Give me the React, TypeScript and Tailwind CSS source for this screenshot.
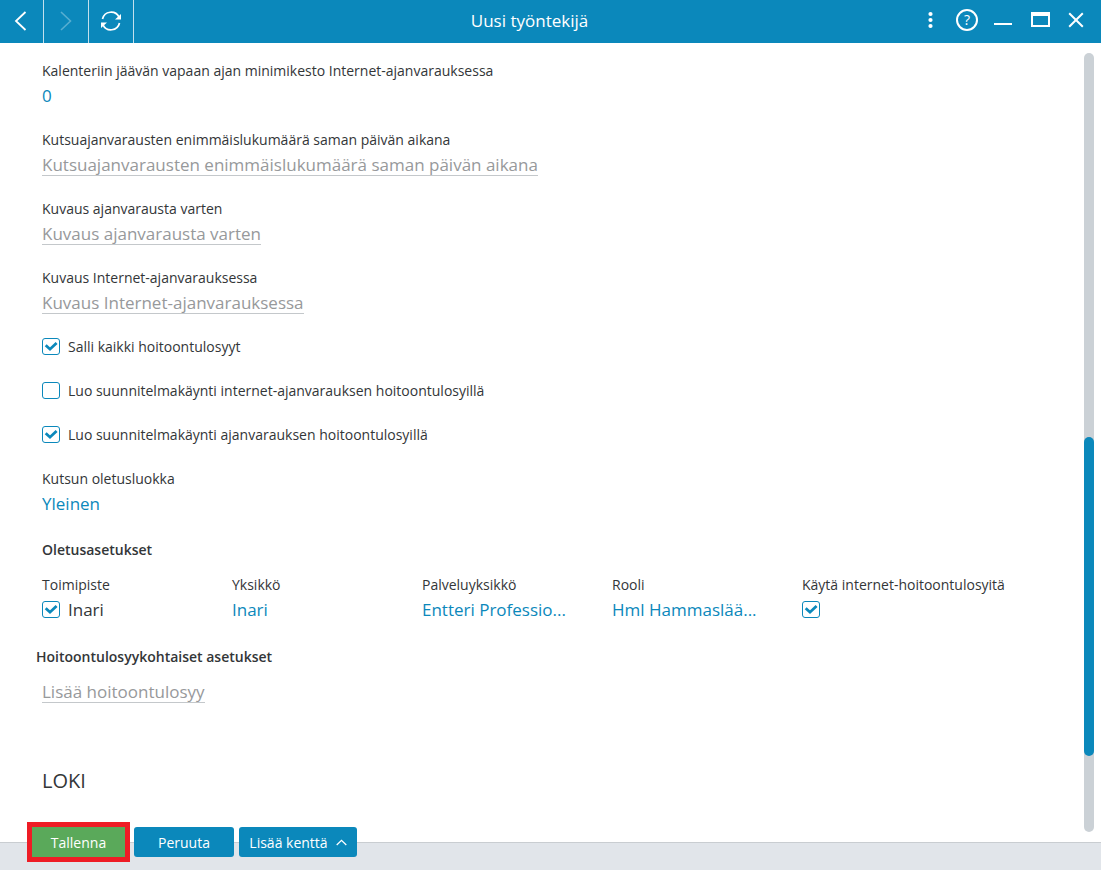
import React, { useState } from "react";

type CheckProps = {
  label: string;
  checked: boolean;
  hideLabel?: boolean;
  large?: boolean;
};

function Check({ label, checked, hideLabel = false, large = false }: CheckProps) {
  const [on, setOn] = useState(checked);
  return (
    <label className="flex h-6 w-fit items-start gap-2 leading-6">
      <span className="grid pt-[3px]">
        <input
          type="checkbox"
          aria-label={hideLabel ? label : undefined}
          checked={on}
          onChange={(e) => setOn(e.target.checked)}
          className="col-start-1 row-start-1 h-[17px] w-[18px] appearance-none rounded-[3px] border border-[#0b88bb] bg-white"
        />
        {on && (
          <svg viewBox="0 0 18 17" className="pointer-events-none col-start-1 row-start-1 h-[17px] w-[18px]" fill="none" stroke="#0b88bb" strokeWidth="2.8">
            <path d="M3.7 7.2 8 11.2 14.6 5" />
          </svg>
        )}
      </span>
      {!hideLabel && <span className={large ? "text-[17px] leading-6" : ""}>{label}</span>}
    </label>
  );
}

function TextField({ id, label, value }: { id: string; label: string; value?: string }) {
  return (
    <div className="pb-px">
      <label htmlFor={id} className="block leading-6">
        {label}
      </label>
      <input
        id={id}
        type="text"
        defaultValue={value}
        placeholder={value ? undefined : label}
        className={
          value
            ? "block h-6 max-w-full pt-0.5 text-[17px] text-[#0b88bb] outline-none [field-sizing:content]"
            : "block h-6 max-w-full border-b border-[#c4c8cb] pt-0.5 text-[17px] outline-none [field-sizing:content] placeholder:text-[#97999b]"
        }
      />
    </div>
  );
}

function SelectField({ id, label, value }: { id: string; label: string; value: string }) {
  return (
    <div className="min-w-0 pb-px">
      <label htmlFor={id} className="block leading-6">
        {label}
      </label>
      <select id={id} className="block h-6 max-w-full appearance-none text-[17px] text-[#0b88bb] outline-none">
        <option>{value}</option>
      </select>
    </div>
  );
}

export default function App() {
  return (
    <div className="flex min-h-screen flex-col bg-white font-['Open_Sans','Noto_Sans',sans-serif] text-[14px] text-[#333638]">
      <header className="flex h-[43px] items-stretch bg-[#0b88bb] text-white">
        <nav className="flex">
          <button aria-label="Takaisin" className="flex w-11 items-center justify-center border-r border-[#c3e0ed] pb-0.5">
            <svg width="22" height="22" viewBox="0 0 22 22" fill="none" stroke="currentColor" strokeWidth="1.8">
              <path d="M14.5 2 5 11l9.500 9" />
            </svg>
          </button>
          <button aria-label="Eteenpäin" disabled className="flex w-[45px] items-center justify-center border-r border-[#c3e0ed] pb-0.5 text-[#57aed1]">
            <svg width="22" height="22" viewBox="0 0 22 22" fill="none" stroke="currentColor" strokeWidth="1.600">
              <path d="M6 2 15.500 11 6 20" />
            </svg>
          </button>
          <button aria-label="Päivitä" className="flex w-[45px] items-center justify-center border-r border-[#c3e0ed] pb-0.5">
            <svg width="22" height="22" viewBox="0 0 22 22" fill="none" stroke="currentColor" strokeWidth="1.700">
              <path d="M2.500 9A8.800 8.800 0 0 1 19 7.200M19.500 13A8.800 8.800 0 0 1 3 14.800" />
              <path d="M21 4v5.500h-6zM1 18v-5.500h6z" fill="currentColor" stroke="none" />
            </svg>
          </button>
        </nav>
        <h1 className="flex-1 self-center pb-0.5 pl-3 text-center text-[17px] leading-6">Uusi työntekijä</h1>
        <div className="flex pr-2 pb-1">
          <button aria-label="Valikko" className="flex w-9 items-center justify-center">
            <svg width="24" height="24" viewBox="0 0 24 24" fill="currentColor">
              <circle cx="11.500" cy="6" r="2.100" />
              <circle cx="11.500" cy="12" r="2.100" />
              <circle cx="11.500" cy="18" r="2.100" />
            </svg>
          </button>
          <button aria-label="Ohje" className="flex w-9 items-center justify-center">
            <span className="flex size-[22px] items-center justify-center rounded-full border-2 border-white text-[14px] leading-none">?</span>
          </button>
          <button aria-label="Pienennä" className="flex w-9 items-center justify-center">
            <svg width="24" height="24" viewBox="0 0 24 24">
              <path d="M3 15h18v2H3z" fill="currentColor" />
            </svg>
          </button>
          <button aria-label="Suurenna" className="flex w-9 items-center justify-center">
            <svg width="24" height="24" viewBox="0 0 24 24">
              <path fillRule="evenodd" d="M4 4h19v15H4zM6 8v9h15V8z" fill="currentColor" />
            </svg>
          </button>
          <button aria-label="Sulje" className="flex w-9 items-center justify-center">
            <svg width="24" height="24" viewBox="0 0 24 24" fill="none" stroke="currentColor" strokeWidth="2">
              <path d="m6.200 5.200 13.600 13.600M19.800 5.200 6.200 18.800" />
            </svg>
          </button>
        </div>
      </header>

      <div className="flex flex-1">
        <main className="min-w-0 flex-1 pt-4 pl-[42px]">
          <div className="flex flex-col gap-5">
            <TextField id="minimikesto" label="Kalenteriin jäävän vapaan ajan minimikesto Internet-ajanvarauksessa" value="0" />
            <TextField id="enimmais" label="Kutsuajanvarausten enimmäislukumäärä saman päivän aikana" />
            <TextField id="kuvaus" label="Kuvaus ajanvarausta varten" />
            <TextField id="internet-kuvaus" label="Kuvaus Internet-ajanvarauksessa" />
            <Check label="Salli kaikki hoitoontulosyyt" checked />
            <Check label="Luo suunnitelmakäynti internet-ajanvarauksen hoitoontulosyillä" checked={false} />
            <Check label="Luo suunnitelmakäynti ajanvarauksen hoitoontulosyillä" checked />
            <SelectField id="oletusluokka" label="Kutsun oletusluokka" value="Yleinen" />
          </div>

          <h2 className="mt-[22px] leading-6 font-semibold">Oletusasetukset</h2>
          <div className="mt-[11px] grid grid-cols-[repeat(4,190px)_1fr]">
            <div>
              <div className="pb-px leading-6">Toimipiste</div>
              <Check label="Inari" checked large />
            </div>
            <SelectField id="yksikko" label="Yksikkö" value="Inari" />
            <SelectField id="palveluyksikko" label="Palveluyksikkö" value="Entteri Professio..." />
            <SelectField id="rooli" label="Rooli" value="Hml Hammaslää..." />
            <div>
              <div className="pb-px leading-6">Käytä internet-hoitoontulosyitä</div>
              <Check label="Käytä internet-hoitoontulosyitä" checked hideLabel />
            </div>
          </div>

          <h2 className="-ml-1.5 mt-[23px] leading-6 font-semibold">Hoitoontulosyykohtaiset asetukset</h2>
          <button className="mt-2.5 block h-6 border-b border-[#c4c8cb] pt-px text-[17px] leading-6 text-[#97999b]">Lisää hoitoontulosyy</button>

          <h2 className="mt-16 pb-10 text-[20px] leading-7">LOKI</h2>
        </main>
        <div className="flex pt-2.5 pr-[7px] pb-2.5">
          <div role="scrollbar" aria-controls="root" aria-valuenow={83} className="flex w-2.5 flex-col rounded-full bg-[#cbd1d6]">
            <div className="flex-[384]" />
            <div className="flex-[319] rounded-full bg-[#0b88bb]" />
            <div className="flex-[76]" />
          </div>
        </div>
      </div>

      <footer className="h-7 border-t border-[#c9cdd1] bg-[#e1e5ea] pl-[27px]">
        <div className="-mt-[21px] flex items-center gap-[5px] text-white">
          <button className="-mr-px h-10 w-[103px] border-[5px] border-[#ee1c25] bg-[#5aa95a]">Tallenna</button>
          <button className="h-[30px] w-[100px] rounded-[3px] bg-[#0b88bb]">Peruuta</button>
          <button className="flex h-[30px] w-[118px] items-center justify-center gap-2 rounded-[3px] bg-[#0b88bb]">
            Lisää kenttä
            <svg width="11" height="7" viewBox="0 0 11 7" fill="none" stroke="currentColor" strokeWidth="1.300">
              <path d="m.7 6 4.800-4.600L10.300 6" />
            </svg>
          </button>
        </div>
      </footer>
    </div>
  );
}
